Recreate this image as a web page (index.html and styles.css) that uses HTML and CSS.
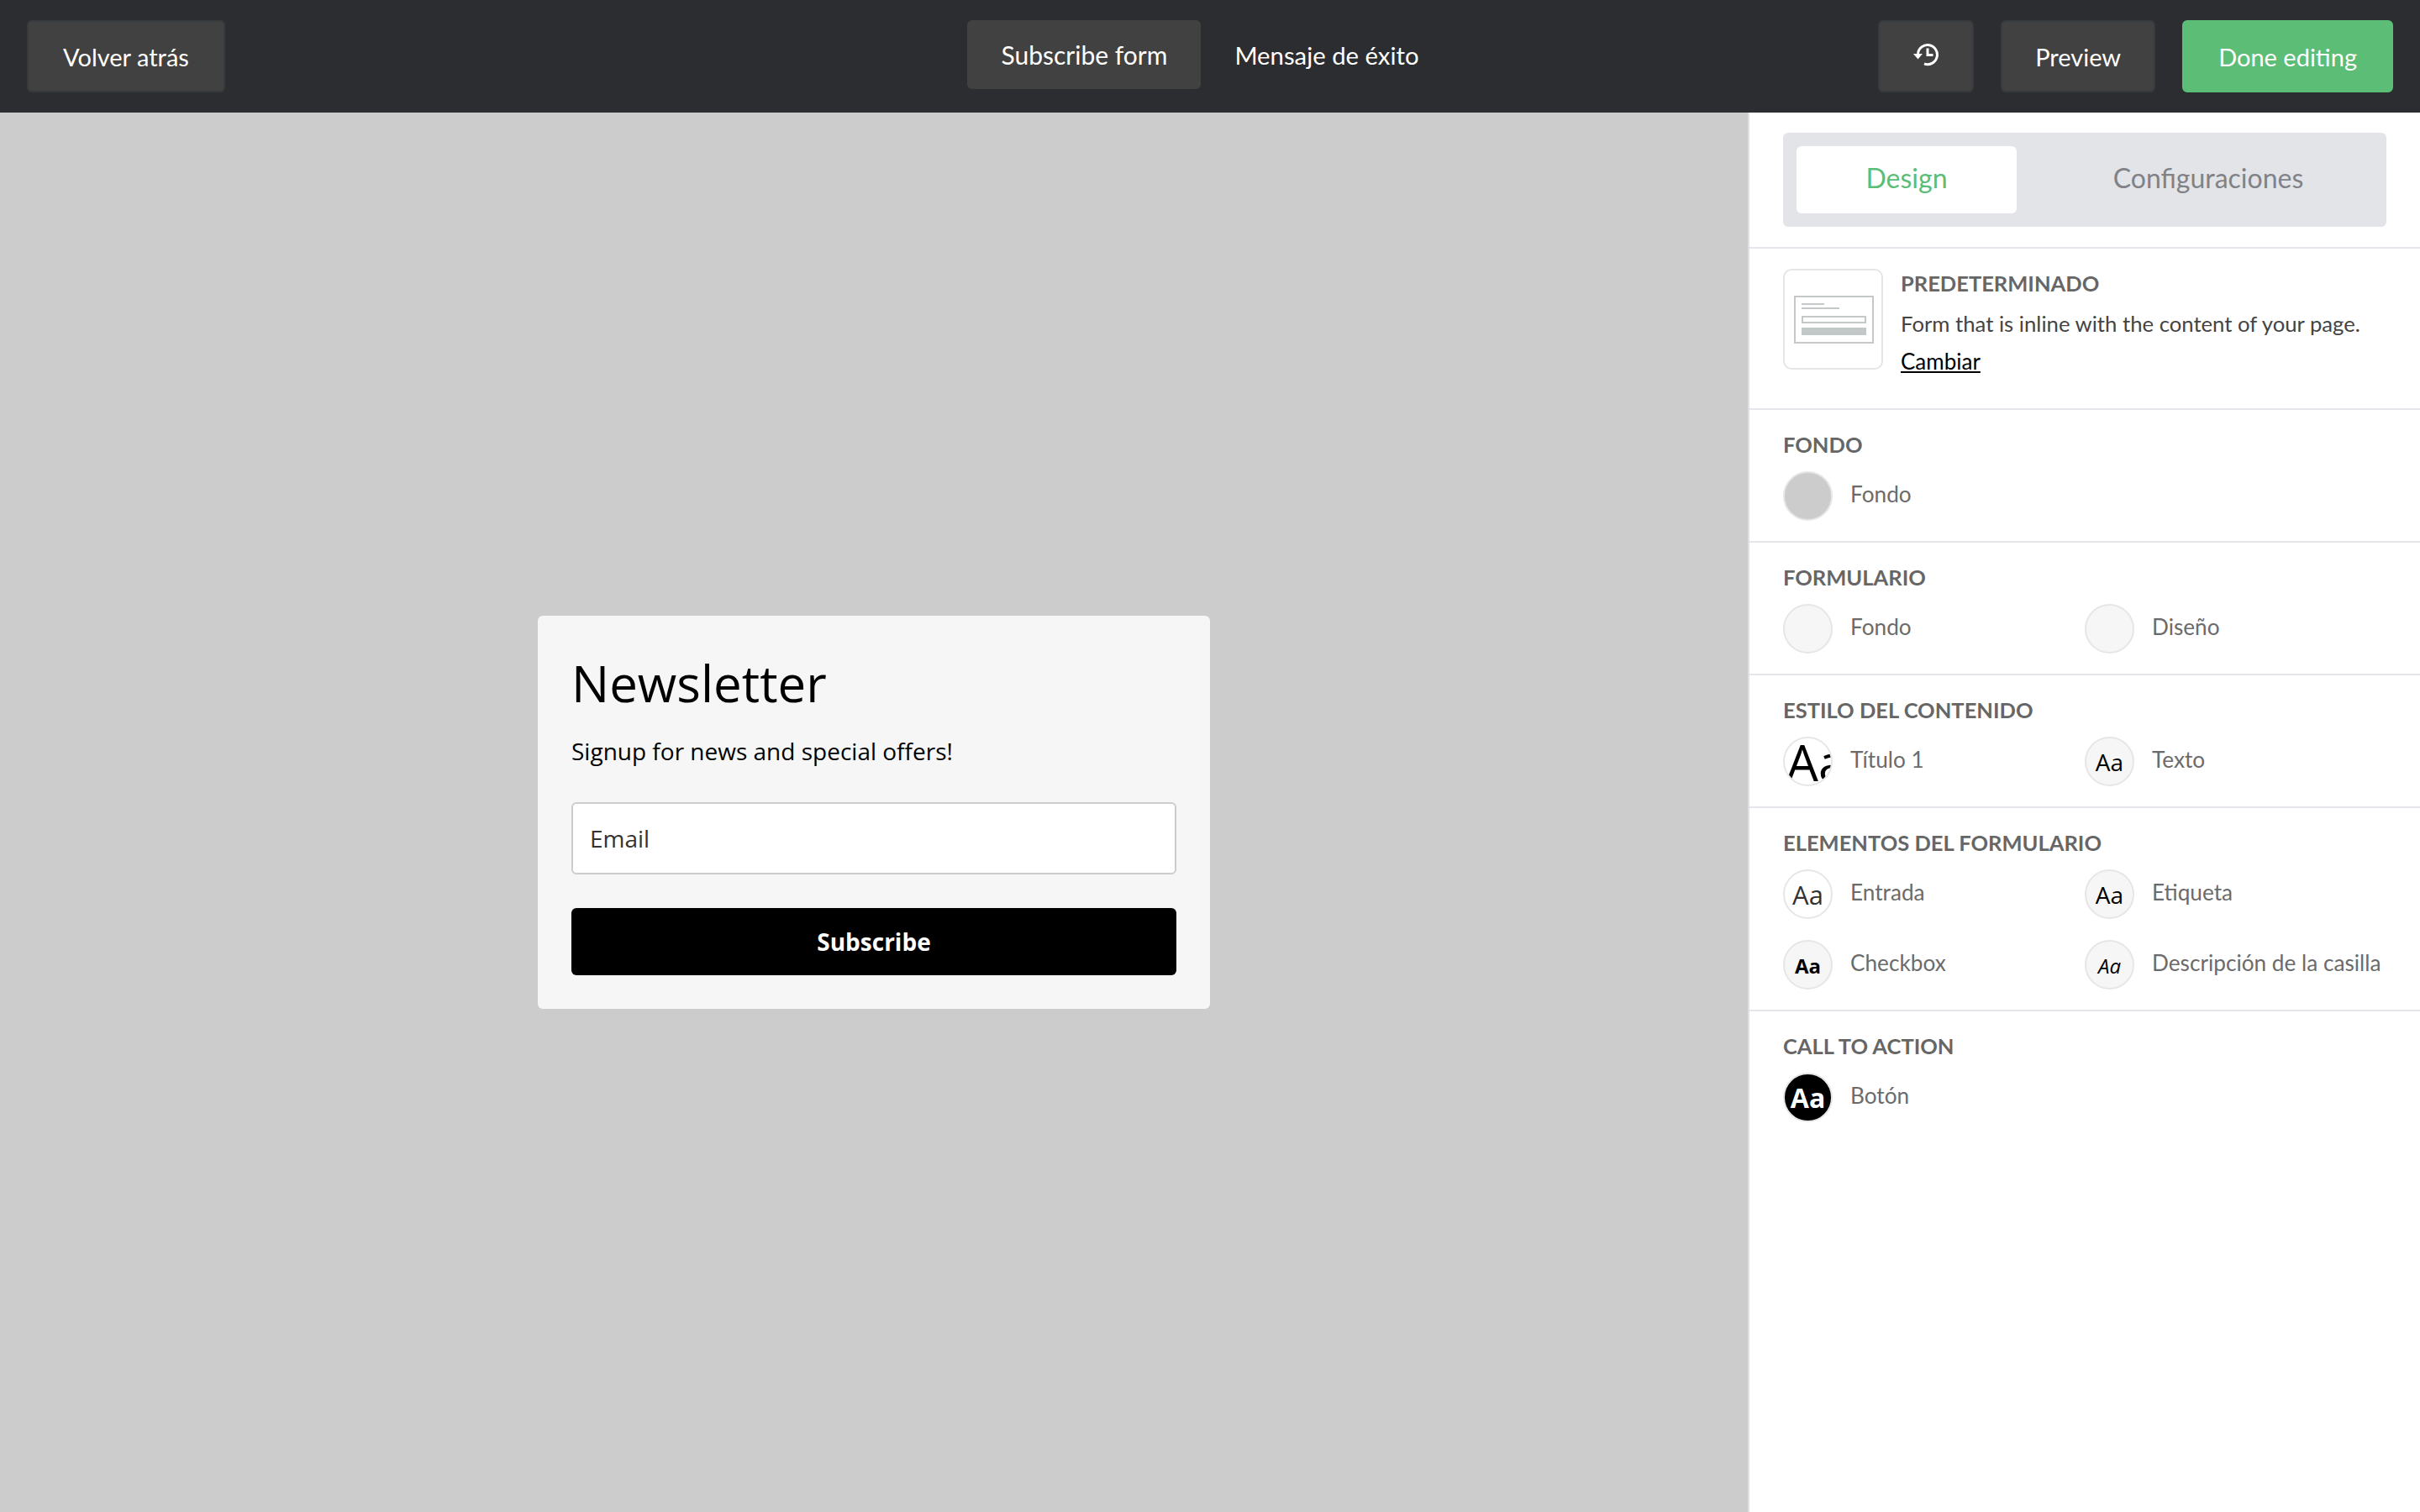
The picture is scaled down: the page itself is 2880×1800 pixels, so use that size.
FILE: index.html
```html
<!DOCTYPE html>
<html lang="es">
  <head>
    <meta charset="UTF-8" />
    <title>Subscribe form</title>
    <link rel="stylesheet" href="styles.css">
  </head>
  <body>
    <header class="topbar">
      <div class="top_left">
        <button class="btn">Volver atrás</button>
      </div>
      <nav class="top_tabs">
        <a href="#" class="top_tab valgt">Subscribe form</a>
        <a href="#" class="top_tab">Mensaje de éxito</a>
      </nav>
      <div class="top_right">
        <button class="btn btn_icon" aria-label="Historial">
          <svg width="32" height="28" viewBox="0 0 32 28">
            <path d="M6.5 13A11.5 11.5 0 1 1 14 24.9" fill="none" stroke="#fff" stroke-width="3" />
            <path d="M1 13H12L6.5 19.5Z" fill="#fff" />
            <path d="M18 6.5V14.5H24.5" fill="none" stroke="#fff" stroke-width="3" />
          </svg>
        </button>
        <button class="btn btn_preview">Preview</button>
        <button class="btn btn_done">Done editing</button>
      </div>
    </header>

    <main class="main">
      <section class="canvas">
        <form class="card">
          <h1>Newsletter</h1>
          <p>Signup for news and special offers!</p>
          <div class="card_input">Email</div>
          <div class="card_button">Subscribe</div>
        </form>
      </section>

      <aside class="panel">
        <div class="tabs_wrap">
          <div class="tabs">
            <a href="#" class="tab aktiv">Design</a>
            <a href="#" class="tab">Configuraciones</a>
          </div>
        </div>

        <div class="layout_row">
          <div class="thumb">
            <svg width="119" height="120" viewBox="0 0 119 120">
              <rect x="14" y="33" width="93" height="55" fill="none" stroke="#c4c8c8" stroke-width="2" />
              <rect x="22" y="41" width="27" height="2" fill="#c4c8c8" />
              <rect x="22" y="46" width="45" height="2" fill="#c4c8c8" />
              <rect x="23" y="57" width="75" height="7" fill="none" stroke="#c4c8c8" stroke-width="2" />
              <rect x="22" y="70" width="77" height="9" fill="#c2c7c7" />
            </svg>
          </div>
          <div class="layout_text">
            <h2>PREDETERMINADO</h2>
            <p>Form that is inline with the content of your page.</p>
            <a href="#">Cambiar</a>
          </div>
        </div>

        <div class="group">
          <h2>FONDO</h2>
          <div class="items">
            <div class="item"><span class="dot dot_grey"></span><span class="lbl">Fondo</span></div>
          </div>
        </div>

        <div class="group">
          <h2>FORMULARIO</h2>
          <div class="items">
            <div class="item"><span class="dot"></span><span class="lbl">Fondo</span></div>
            <div class="item"><span class="dot"></span><span class="lbl">Diseño</span></div>
          </div>
        </div>

        <div class="group">
          <h2>ESTILO DEL CONTENIDO</h2>
          <div class="items">
            <div class="item"><span class="dot dot_white aa_title">Aa</span><span class="lbl">Título 1</span></div>
            <div class="item"><span class="dot aa_text">Aa</span><span class="lbl">Texto</span></div>
          </div>
        </div>

        <div class="group">
          <h2>ELEMENTOS DEL FORMULARIO</h2>
          <div class="items">
            <div class="item"><span class="dot dot_white aa_input">Aa</span><span class="lbl">Entrada</span></div>
            <div class="item"><span class="dot aa_text">Aa</span><span class="lbl">Etiqueta</span></div>
            <div class="item"><span class="dot aa_check">Aa</span><span class="lbl">Checkbox</span></div>
            <div class="item"><span class="dot aa_desc">Aa</span><span class="lbl">Descripción de la casilla</span></div>
          </div>
        </div>

        <div class="group group_last">
          <h2>CALL TO ACTION</h2>
          <div class="items">
            <div class="item"><span class="dot aa_button">Aa</span><span class="lbl">Botón</span></div>
          </div>
        </div>
      </aside>
    </main>
  </body>
</html>
```

FILE: styles.css
```css
* {
  box-sizing: border-box;
}

body {
  margin: 0;
  height: 100vh;
  display: flex;
  flex-direction: column;
  overflow: hidden;
  font-family: "Lato", "Liberation Sans", sans-serif;
  background-color: #cccccc;
}

a {
  text-decoration: none;
}

/* top bar */
.topbar {
  height: 134px;
  flex-shrink: 0;
  display: grid;
  grid-template-columns: 1fr auto 1fr;
  padding: 24px 32px 0;
  background-color: #2c2d30;
}

.top_right {
  display: flex;
  justify-content: flex-end;
  gap: 32px;
}

.top_tabs {
  display: flex;
}

.top_tab {
  height: 82px;
  padding: 0 40px;
  display: flex;
  align-items: center;
  font-size: 29.3px;
  color: white;
  border-radius: 6px;
}

.top_tab.valgt {
  font-size: 30px;
  background-color: #414141;
}

.btn {
  height: 86px;
  padding: 0 41px;
  font-family: inherit;
  font-size: 29px;
  color: white;
  background-color: #414141;
  border: 2px solid #383b3d;
  border-radius: 6px;
}

.btn_icon {
  width: 114px;
  padding: 0;
  display: flex;
  align-items: center;
  justify-content: center;
}

.btn_icon svg {
  margin-bottom: 4px;
}

.btn_preview {
  padding: 0 39px;
}

.btn_done {
  background-color: #5bbd76;
  border-color: #5bbd76;
}

/* main area */
.main {
  flex: 1;
  display: flex;
}

.canvas {
  flex: 1;
  display: flex;
  align-items: center;
  justify-content: center;
}

/* newsletter form */
.card {
  width: 800px;
  height: 468px;
  padding: 40px;
  font-family: "Open Sans", sans-serif;
  color: black;
  background-color: #f6f6f6;
  border-radius: 6px;
}

.card h1 {
  margin: 0;
  font-size: 60px;
  font-weight: 400;
  line-height: 80px;
}

.card p {
  margin: 21px 0 0;
  font-size: 28px;
  line-height: 40px;
}

.card_input {
  height: 86px;
  margin-top: 41px;
  padding: 0 20px;
  display: flex;
  align-items: center;
  font-size: 28px;
  color: #333333;
  background-color: white;
  border: 2px solid #cccccc;
  border-radius: 6px;
}

.card_button {
  height: 80px;
  margin-top: 40px;
  display: flex;
  align-items: center;
  justify-content: center;
  font-size: 28px;
  font-weight: 700;
  color: white;
  background-color: black;
  border-radius: 6px;
}

/* right panel */
.panel {
  width: 800px;
  flex-shrink: 0;
  background-color: white;
  border-left: 2px solid #e0e0e2;
}

.tabs_wrap {
  padding: 24px 40px;
  border-bottom: 2px solid #e6e6ea;
}

.tabs {
  height: 112px;
  padding: 16px 0 16px 16px;
  display: flex;
  background-color: #e3e4e8;
  border-radius: 6px;
}

.tab {
  display: flex;
  align-items: center;
  justify-content: center;
  flex: 1;
  padding-left: 16px;
  padding-bottom: 6px;
  font-size: 32px;
  color: #808288;
}

.tab.aktiv {
  flex: 0 0 262px;
  padding-left: 0;
  color: #5bbd76;
  background-color: white;
  border-radius: 6px;
}

h2 {
  margin: 0;
  font-size: 25.5px;
  font-weight: 700;
  line-height: 26px;
  color: #666666;
}

.layout_row {
  height: 192px;
  padding: 24px 40px 0;
  display: flex;
  gap: 21px;
  border-bottom: 2px solid #e6e6ea;
}

.thumb {
  width: 119px;
  height: 120px;
  flex-shrink: 0;
  border: 2px solid #e6e6e8;
  border-radius: 10px;
  overflow: hidden;
}

.thumb svg {
  display: block;
  margin: -2px;
}

.layout_text {
  padding-top: 4px;
}

.layout_text p {
  margin: 13px 0 1px;
  font-size: 25.7px;
  line-height: 44px;
  color: #444444;
}

.layout_text a {
  font-size: 26px;
  line-height: 44px;
  color: black;
  text-decoration: underline;
}

.group {
  padding: 28px 40px 24px;
  border-bottom: 2px solid #e6e6ea;
}

.group_last {
  border-bottom: 0;
}

.items {
  display: grid;
  grid-template-columns: 359px 1fr;
  row-gap: 25px;
  margin-top: 19px;
}

.item {
  display: flex;
  align-items: center;
  gap: 21px;
}

.lbl {
  padding-bottom: 5px;
  font-size: 26.2px;
  color: #6b6b6b;
}

.dot {
  width: 59px;
  height: 59px;
  flex-shrink: 0;
  overflow: hidden;
  text-align: center;
  white-space: nowrap;
  font-family: "Open Sans", sans-serif;
  color: black;
  background-color: #f6f6f6;
  border: 2px solid #e6e6ea;
  border-radius: 50%;
}

.dot_grey {
  background-color: #cccccc;
}

.dot_white {
  background-color: white;
}

.aa_title {
  font-size: 60px;
  line-height: 56px;
  padding-left: 2px;
}

.aa_text {
  font-size: 28px;
  line-height: 57px;
}

.aa_input {
  font-size: 31px;
  line-height: 57px;
  color: #333333;
}

.aa_check {
  font-size: 24px;
  font-weight: 700;
  line-height: 57px;
}

.aa_desc {
  font-size: 24px;
  font-style: italic;
  line-height: 57px;
}

.aa_button {
  font-size: 32px;
  font-weight: 700;
  line-height: 56px;
  color: white;
  background-color: black;
}
```
